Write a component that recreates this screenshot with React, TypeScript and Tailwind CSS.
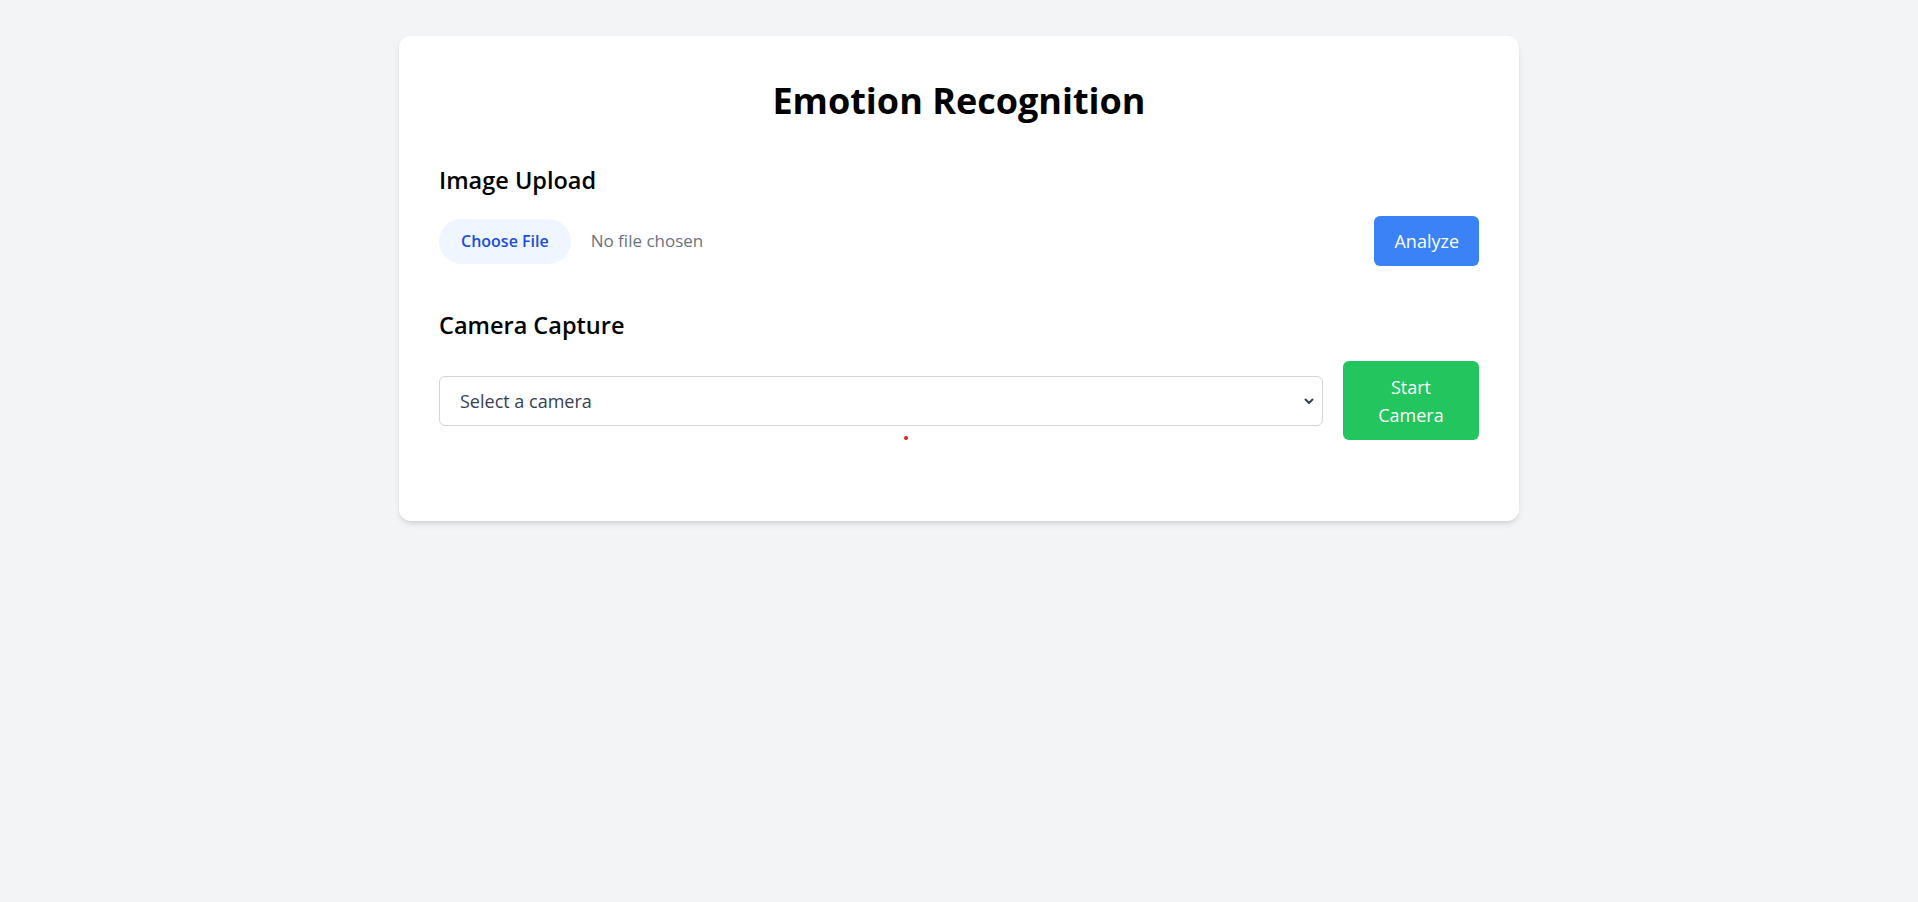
import { useState } from 'react';

const ChevronDown = () => (
  <svg
    width="12"
    height="12"
    viewBox="0 0 12 12"
    fill="none"
    stroke="#374151"
    strokeWidth="2"
    strokeLinecap="round"
    strokeLinejoin="round"
    aria-hidden="true"
  >
    <path d="M2.5 4.5 6 8l3.5-3.5" />
  </svg>
);

export default function App() {
  const [fileName, setFileName] = useState<string | null>(null);
  const [camera, setCamera] = useState('');

  return (
    <div className="min-h-screen bg-[#f3f4f6] pt-9 font-['Open_Sans',sans-serif]">
      <div className="relative mx-auto w-[1120px] rounded-xl bg-white p-10 shadow-md">
        <h1 className="mb-[41px] pt-[3px] text-center text-4xl font-bold leading-[44px] text-black">
          Emotion Recognition
        </h1>

        <section>
          <h2 className="mb-5 text-[23.5px] font-semibold leading-8 text-black">Image Upload</h2>
          <div className="flex items-center justify-between">
            <label className="flex cursor-pointer items-center gap-5">
              <input
                type="file"
                accept="image/*"
                className="hidden"
                onChange={(e) => setFileName(e.target.files?.[0]?.name ?? null)}
              />
              <span className="flex h-[45px] items-center rounded-full bg-[#eff6ff] px-[22px] text-base font-semibold text-[#1d4ed8]">
                Choose File
              </span>
              <span className="text-[17px] text-[#6b7280]">
                {fileName ?? 'No file chosen'}
              </span>
            </label>
            <button
              type="button"
              className="h-[50px] rounded-md bg-[#3b82f6] px-5 text-lg text-white"
            >
              Analyze
            </button>
          </div>
        </section>

        <section className="mt-[43px]">
          <h2 className="mb-5 text-[23.5px] font-semibold leading-8 text-black">Camera Capture</h2>
          <div className="flex items-center gap-5">
            <div className="relative flex-1">
              <select
                value={camera}
                onChange={(e) => setCamera(e.target.value)}
                className="h-[50px] w-full appearance-none rounded-md border border-[#d1d5db] bg-white px-5 text-lg text-[#374151] outline-none"
              >
                <option value="">Select a camera</option>
              </select>
              <span className="pointer-events-none absolute right-2 top-1/2 -translate-y-1/2">
                <ChevronDown />
              </span>
            </div>
            <button
              type="button"
              className="h-[79px] w-[136px] rounded-md bg-[#22c55e] text-lg leading-7 text-white"
            >
              Start
              <br />
              Camera
            </button>
          </div>
        </section>

        <div className="h-[41px]" />
        <span className="absolute left-[505px] top-[400px] h-1 w-1 rounded-full bg-[#e11d1d]" />
      </div>
    </div>
  );
}
